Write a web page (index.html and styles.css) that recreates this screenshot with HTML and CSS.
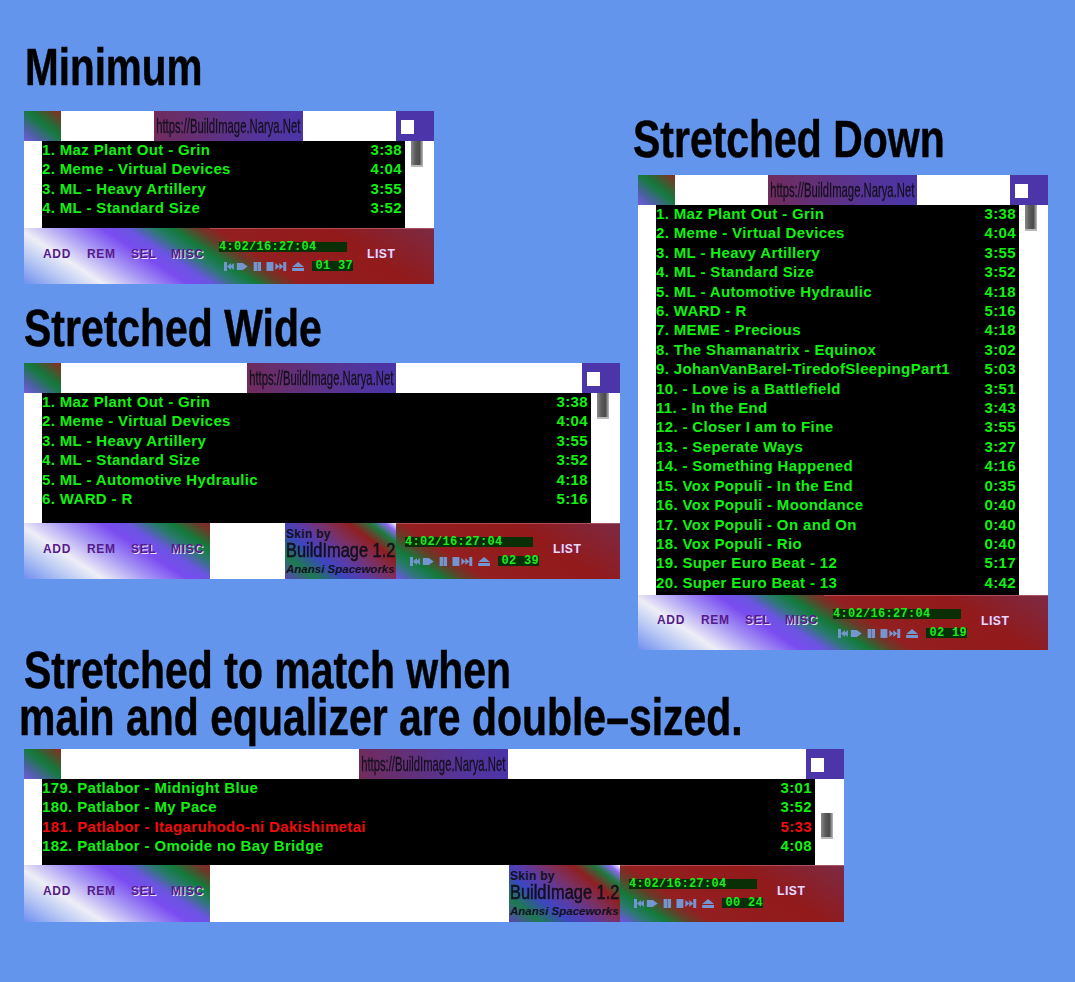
FILE: index.html
```html
<!DOCTYPE html>
<html lang="en">
<head>
<meta charset="utf-8">
<title>BuildImage playlist skin</title>
<link rel="stylesheet" href="styles.css">
</head>
<body>
<svg class="defs" aria-hidden="true">
  <symbol id="transport" viewBox="0 0 82 9">
    <path d="M0 0h3v9H0zM3 4.5 7 1v7zM6 4.5 10 1v7z"/>
    <path d="M13 1h6l5 3.5-5 3.5h-6z"/>
    <path d="M30 0h3.5v9H30zM34 0h3.5v9H34z"/>
    <path d="M43 0h7v9h-7z"/>
    <path d="M52 1l4 3.5L52 8zM56 1l4 3.5L56 8zM60 0h3v9h-3z"/>
    <path d="M69 5l6-5 6 5zM69 6h12v3H69z"/>
  </symbol>
</svg>
<main class="desk">
  <h1 class="head head-min">Minimum</h1>
  <section class="win win-min">
    <div class="title"><div class="corner"></div><div class="fill"></div><div class="caption"><span class="caption-text">https://BuildImage.Narya.Net</span></div><div class="fill"></div><div class="closer"><span class="square"></span></div></div>
    <div class="body body-min">
      <div class="edge"></div>
      <ol class="rows">
        <li class="row"><span>1. Maz Plant Out - Grin</span><span>3:38</span></li>
        <li class="row"><span>2. Meme - Virtual Devices</span><span>4:04</span></li>
        <li class="row"><span>3. ML - Heavy Artillery</span><span>3:55</span></li>
        <li class="row"><span>4. ML - Standard Size</span><span>3:52</span></li>
      </ol>
      <div class="rail"><span class="thumb"></span></div>
    </div>
    <div class="foot">
      <div class="tools"><span class="tool">ADD</span><span class="tool">REM</span><span class="tool tool-lit">SEL</span><span class="tool tool-lit">MISC</span></div>
      <div class="deck"><div class="readout"><div class="clock">4:02/16:27:04</div><div class="controls"><svg class="transport"><use href="#transport"/></svg><span class="pos">01 37</span></div></div><span class="list-btn">LIST</span></div>
    </div>
  </section>

  <h1 class="head head-wide">Stretched Wide</h1>
  <section class="win win-wide">
    <div class="title"><div class="corner"></div><div class="fill"></div><div class="caption"><span class="caption-text">https://BuildImage.Narya.Net</span></div><div class="fill"></div><div class="closer"><span class="square"></span></div></div>
    <div class="body body-wide">
      <div class="edge"></div>
      <ol class="rows">
        <li class="row"><span>1. Maz Plant Out - Grin</span><span>3:38</span></li>
        <li class="row"><span>2. Meme - Virtual Devices</span><span>4:04</span></li>
        <li class="row"><span>3. ML - Heavy Artillery</span><span>3:55</span></li>
        <li class="row"><span>4. ML - Standard Size</span><span>3:52</span></li>
        <li class="row"><span>5. ML - Automotive Hydraulic</span><span>4:18</span></li>
        <li class="row"><span>6. WARD - R</span><span>5:16</span></li>
      </ol>
      <div class="rail"><span class="thumb"></span></div>
    </div>
    <div class="foot">
      <div class="tools"><span class="tool">ADD</span><span class="tool">REM</span><span class="tool tool-lit">SEL</span><span class="tool tool-lit">MISC</span></div>
      <div class="fill"></div>
      <div class="skin"><span class="skin-by">Skin by</span><span class="skin-name">BuildImage 1.2</span><span class="skin-maker">Anansi Spaceworks</span></div>
      <div class="deck"><div class="readout"><div class="clock">4:02/16:27:04</div><div class="controls"><svg class="transport"><use href="#transport"/></svg><span class="pos">02 39</span></div></div><span class="list-btn">LIST</span></div>
    </div>
  </section>

  <h1 class="head head-down">Stretched Down</h1>
  <section class="win win-down">
    <div class="title"><div class="corner"></div><div class="fill"></div><div class="caption"><span class="caption-text">https://BuildImage.Narya.Net</span></div><div class="fill"></div><div class="closer"><span class="square"></span></div></div>
    <div class="body body-down">
      <div class="edge"></div>
      <ol class="rows">
        <li class="row"><span>1. Maz Plant Out - Grin</span><span>3:38</span></li>
        <li class="row"><span>2. Meme - Virtual Devices</span><span>4:04</span></li>
        <li class="row"><span>3. ML - Heavy Artillery</span><span>3:55</span></li>
        <li class="row"><span>4. ML - Standard Size</span><span>3:52</span></li>
        <li class="row"><span>5. ML - Automotive Hydraulic</span><span>4:18</span></li>
        <li class="row"><span>6. WARD - R</span><span>5:16</span></li>
        <li class="row"><span>7. MEME - Precious</span><span>4:18</span></li>
        <li class="row"><span>8. The Shamanatrix - Equinox</span><span>3:02</span></li>
        <li class="row"><span>9. JohanVanBarel-TiredofSleepingPart1</span><span>5:03</span></li>
        <li class="row"><span>10. - Love is a Battlefield</span><span>3:51</span></li>
        <li class="row"><span>11. - In the End</span><span>3:43</span></li>
        <li class="row"><span>12. - Closer I am to Fine</span><span>3:55</span></li>
        <li class="row"><span>13. - Seperate Ways</span><span>3:27</span></li>
        <li class="row"><span>14. - Something Happened</span><span>4:16</span></li>
        <li class="row"><span>15. Vox Populi - In the End</span><span>0:35</span></li>
        <li class="row"><span>16. Vox Populi - Moondance</span><span>0:40</span></li>
        <li class="row"><span>17. Vox Populi - On and On</span><span>0:40</span></li>
        <li class="row"><span>18. Vox Populi - Rio</span><span>0:40</span></li>
        <li class="row"><span>19. Super Euro Beat - 12</span><span>5:17</span></li>
        <li class="row"><span>20. Super Euro Beat - 13</span><span>4:42</span></li>
      </ol>
      <div class="rail"><span class="thumb"></span></div>
    </div>
    <div class="foot">
      <div class="tools"><span class="tool">ADD</span><span class="tool">REM</span><span class="tool tool-lit">SEL</span><span class="tool tool-lit">MISC</span></div>
      <div class="deck"><div class="readout"><div class="clock">4:02/16:27:04</div><div class="controls"><svg class="transport"><use href="#transport"/></svg><span class="pos">02 19</span></div></div><span class="list-btn">LIST</span></div>
    </div>
  </section>

  <h1 class="head head-match">Stretched to match when</h1>
  <h1 class="head head-match2">main and equalizer are double–sized.</h1>
  <section class="win win-double">
    <div class="title"><div class="corner"></div><div class="fill"></div><div class="caption"><span class="caption-text">https://BuildImage.Narya.Net</span></div><div class="fill"></div><div class="closer"><span class="square"></span></div></div>
    <div class="body body-double">
      <div class="edge"></div>
      <ol class="rows">
        <li class="row"><span>179. Patlabor - Midnight Blue</span><span>3:01</span></li>
        <li class="row"><span>180. Patlabor - My Pace</span><span>3:52</span></li>
        <li class="row row-now"><span>181. Patlabor - Itagaruhodo-ni Dakishimetai</span><span>5:33</span></li>
        <li class="row"><span>182. Patlabor - Omoide no Bay Bridge</span><span>4:08</span></li>
      </ol>
      <div class="rail rail-end"><span class="thumb"></span></div>
    </div>
    <div class="foot">
      <div class="tools"><span class="tool">ADD</span><span class="tool">REM</span><span class="tool tool-lit">SEL</span><span class="tool tool-lit">MISC</span></div>
      <div class="fill"></div>
      <div class="skin"><span class="skin-by">Skin by</span><span class="skin-name">BuildImage 1.2</span><span class="skin-maker">Anansi Spaceworks</span></div>
      <div class="deck"><div class="readout"><div class="clock">4:02/16:27:04</div><div class="controls"><svg class="transport"><use href="#transport"/></svg><span class="pos">00 24</span></div></div><span class="list-btn">LIST</span></div>
    </div>
  </section>
</main>
</body>
</html>
```
FILE: styles.css
```css
* { box-sizing: border-box; }
html, body { margin: 0; padding: 0; background: #6495ed; }
.defs { position: absolute; width: 0; height: 0; }
.desk { position: relative; width: 1075px; height: 982px; overflow: hidden; font-family: "Liberation Sans", Arial, sans-serif; }

.head { position: absolute; margin: 0; font-size: 51px; line-height: 44px; font-weight: 700; color: #000; white-space: nowrap; transform-origin: left top; transform: scaleX(.803); -webkit-text-stroke: .5px #000; }
.head-min { left: 25px; top: 46px; transform: scaleX(.793); }
.head-wide { left: 24px; top: 307px; }
.head-down { left: 633px; top: 118px; }
.head-match { left: 24px; top: 649px; }
.head-match2 { left: 19px; top: 696px; }

.win { position: absolute; display: flex; flex-direction: column; background: #fff; }
.win-min { left: 24px; top: 111px; width: 410px; height: 173px; }
.win-wide { left: 24px; top: 363px; width: 596px; height: 216px; }
.win-down { left: 638px; top: 175px; width: 410px; height: 475px; }
.win-double { left: 24px; top: 749px; width: 820px; height: 173px; }

.title { display: flex; height: 30px; flex: none; }
.fill { flex: 1; background: #fff; }
.corner { width: 37px; background: linear-gradient(38deg, #6f5fd8 0%, #4f5fa8 22%, #177a42 52%, #1d7038 62%, #8c2a20 100%); }
.caption { width: 149px; display: flex; align-items: center; justify-content: center; background: linear-gradient(90deg, #702c5c 0%, #54349a 70%, #4b35a8 100%); }
.caption-text { flex: none; color: #14101e; font-size: 21px; line-height: 30px; white-space: nowrap; transform: scaleX(.537); -webkit-text-stroke: .3px #14101e; }
.closer { width: 38px; background: #4b35a8; display: flex; align-items: flex-start; padding: 9px 0 0 5px; }
.square { width: 13px; height: 14px; background: #fff; }

.body { display: flex; flex: none; }
.body-min { height: 87px; }
.body-wide { height: 130px; }
.body-down { height: 390px; }
.body-double { height: 86px; }
.edge { width: 18px; flex: none; background: #fff; }
.rows { flex: 1; margin: 0; padding: 0 3px 0 0; list-style: none; background: #000; color: #12f012; font-size: 15px; font-weight: 700; letter-spacing: .36px; }
.row { display: flex; justify-content: space-between; height: 19.42px; line-height: 18px; white-space: nowrap; }
.row-now { color: #f00c0c; }
.rail { width: 29px; flex: none; background: #fff; padding-left: 6px; }
.rail-end { padding-top: 34px; }
.thumb { display: block; width: 12px; height: 26px; background: linear-gradient(90deg, #8a8a8a 0%, #5c5c5c 35%, #4a4a4a 70%, #bdbdbd 100%); border-bottom: 2px solid #b8b8b8; }

.foot { flex: 1; display: flex; min-height: 0; }
.tools { width: 186px; flex: none; display: grid; grid-template-columns: 44px 44px 40px 34px; align-items: center; padding: 0 0 5px 19px; background: linear-gradient(33deg, #6f8ff0 0%, #b8c8f4 9%, #eeeef6 16%, #a898f4 25%, #7a4cf0 33%, #6a55e0 38%, #2a7a70 43%, #137a3a 47%, #6a3a28 52%, #931f20 56%, #921a1a 78%, #7c2a44 100%) left top / 410px 100% no-repeat; }
.tool { color: #551a8b; font-size: 12px; font-weight: 700; letter-spacing: .7px; white-space: nowrap; }
.tool-lit { text-shadow: 1px 1px 0 rgba(255,255,255,.85); }
.deck { width: 224px; flex: none; display: flex; gap: 14px; padding: 14px 0 0 9px; box-shadow: inset 0 1px 0 rgba(255,190,190,.3); background: linear-gradient(33deg, #6f8ff0 0%, #b8c8f4 9%, #eeeef6 16%, #a898f4 25%, #7a4cf0 33%, #6a55e0 38%, #2a7a70 43%, #137a3a 47%, #6a3a28 52%, #931f20 56%, #921a1a 78%, #7c2a44 100%) right top / 410px 100% no-repeat; }
.readout { width: 134px; flex: none; display: flex; flex-direction: column; gap: 9px; }
.clock { width: 128px; height: 10px; background: #0a2e06; color: #1fe81f; font-family: "Liberation Mono", monospace; font-size: 12px; font-weight: 700; line-height: 10px; letter-spacing: .3px; white-space: nowrap; }
.controls { display: flex; align-items: center; gap: 7px; height: 10px; padding-left: 5px; }
.transport { width: 81px; height: 9px; flex: none; fill: #7496d0; filter: blur(.5px); }
.pos { width: 41px; height: 10px; flex: none; background: #07300a; color: #1fe81f; font-family: "Liberation Mono", monospace; font-size: 12px; font-weight: 700; line-height: 10px; letter-spacing: .3px; text-align: right; white-space: pre; }
.list-btn { margin-top: 5px; color: #eed8ee; font-size: 12px; font-weight: 700; letter-spacing: .6px; text-shadow: 1px 0 0 #7a2a8a; line-height: 14px; }

.skin { width: 111px; flex: none; display: flex; flex-direction: column; padding: 5px 0 0 1px; color: #12101c; white-space: nowrap; background: linear-gradient(38deg, #5a44b8 0%, #1d7a50 17%, #3c46c0 33%, #5a3ca8 45%, #7c3060 60%, #8e1f20 74%, #1d7a40 86%, #8a6af0 94%, #fff 100%); }
.skin-by { font-size: 12px; font-weight: 700; line-height: 12px; letter-spacing: .3px; }
.skin-name { font-size: 20px; line-height: 20px; font-weight: 400; -webkit-text-stroke: .5px #12101c; transform-origin: left center; transform: scaleX(.82); }
.skin-maker { font-size: 11.5px; line-height: 14px; font-style: italic; font-weight: 700; margin-top: 2px; }
```
